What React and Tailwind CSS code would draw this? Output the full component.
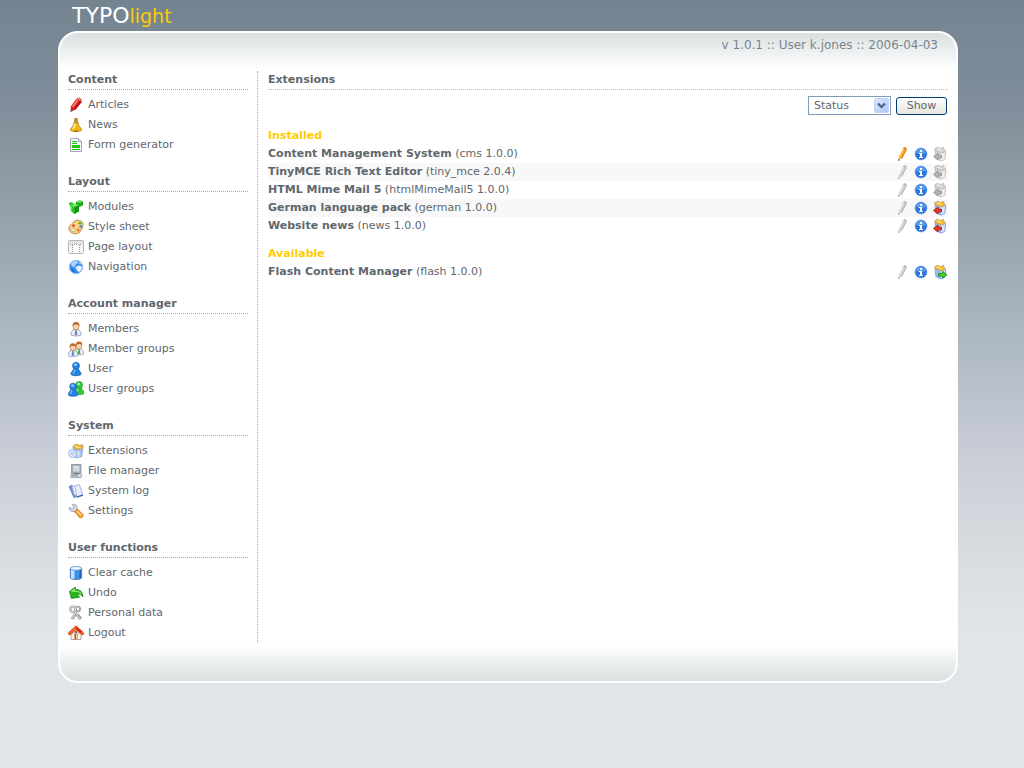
import React from "react";

function Svg({ children }) {
  return (
    <svg viewBox="0 0 16 16" className="size-4 shrink-0" aria-hidden="true">
      {children}
    </svg>
  );
}

const PenIcon = () => (
  <Svg>
    <path d="M3 12 2 15.500l3-1.800z" fill="#5f6f90" />
    <path d="M2.500 13.200 3 9.300 8 2.500 10.500.6l3.100 1.700-.1 3.200L8.200 12l-3.500 2z" fill="#dc1f1f" />
    <path d="M4.600 10 10 2.800" stroke="#ff8a7a" strokeWidth="1.500" />
    <path d="M6.500 12.500 12.900 4.500" stroke="#8e0f1c" strokeWidth="1.100" />
    <path d="m10 1.400 3 2.200" stroke="#f0c8b0" strokeWidth="1" />
  </Svg>
);

const BellIcon = () => (
  <Svg>
    <path d="M6.700 1.500h2.600v5H6.700z" fill="#c98a12" stroke="#a06a10" strokeWidth=".6" />
    <path d="M5.800 5.500h4.400c.3 2.800.8 4 3.200 6v2c-3 1.500-7.800 1.500-10.800 0v-2C5 9.500 5.400 8.500 5.800 5.500z" fill="#f3b51c" stroke="#b87c14" strokeWidth=".7" />
    <path d="M7 6.500c-.2 2.500-.8 4-2 5.500" stroke="#fff0a0" strokeWidth="1.600" fill="none" />
    <path d="M6 13.500h4v1.300H6z" fill="#a0620c" />
  </Svg>
);

const FormIcon = () => (
  <Svg>
    <path d="M2.500 1.500h8l3 3v10h-11z" fill="#f8f9fc" stroke="#a2a8ba" />
    <path d="M10.500 1.500v3h3" fill="#dfe3ee" stroke="#a2a8ba" />
    <path d="M4 4h5v1H4zM4 6h5v1H4zM4 8h8v3H4zM4 12h8v1H4z" fill="#27c414" />
  </Svg>
);

const ModulesIcon = () => (
  <Svg>
    <path d="m8 3 3.500-1.800L15 2.300v4L11.600 8 8 6.500z" fill="#20a81c" />
    <path d="m8 3 3.500-1.800L15 2.300 11.800 4z" fill="#6fe35c" />
    <path d="m2 5.500 4-1 5 1.800v6L6.500 15 2.800 12z" fill="#2bc722" />
    <path d="m2 5.500 4-1 5 1.800-4.500 1.800z" fill="#78e864" />
    <path d="M6.500 8.100 11 6.300v6L6.500 15z" fill="#149414" />
    <path d="m1 4 2-1 2 .7v2L3 6.600 1 5.800z" fill="#39ca2c" />
    <path d="M3.300 7.300v4" stroke="#8df07a" strokeWidth="1" />
  </Svg>
);

const PaletteIcon = () => (
  <Svg>
    <path d="M9 1.300c4-.6 6.300 1.700 6 5-.2 3-1.800 4-2.800 6.200-.8 1.800-3.200 2.400-5.700 2.100C3 14.300.7 11.900 1 9c.2-2.800 1.800-2.700 3-4.300S6.500 1.700 9 1.300z" fill="#f6d490" stroke="#b57c36" strokeWidth=".9" />
    <circle cx="5.300" cy="10.800" r="1.700" fill="#fff" stroke="#b57c36" strokeWidth=".6" />
    <circle cx="5.500" cy="6.600" r="1.300" fill="#e83420" />
    <circle cx="8.700" cy="4" r="1.300" fill="#f4e219" />
    <circle cx="12" cy="4.200" r="1.300" fill="#32b52c" />
    <circle cx="12.700" cy="7.500" r="1.300" fill="#2b7de0" />
    <circle cx="10.300" cy="11" r="1.500" fill="#f27b18" />
  </Svg>
);

const LayoutIcon = () => (
  <Svg>
    <rect x=".5" y="1.500" width="15" height="13" rx="1" fill="#f5f5f5" stroke="#b8b8b8" />
    <path d="M1 2h14v3H1z" fill="#e2e2e2" />
    <path d="M5 6h6v8H5z" fill="#fff" />
    <path d="M2 5.500h12M4.500 6v8M11.500 6v8" stroke="#999" strokeDasharray="1 1" />
  </Svg>
);

const GlobeIcon = () => (
  <Svg>
    <circle cx="8" cy="8" r="6.700" fill="#3a90ea" stroke="#7fb5ea" strokeWidth=".8" />
    <path d="M2.500 5C4 2.300 7 1.500 9.500 2L10 4 7.500 5.500 7 8 4.500 7.500z" fill="#a9d3fa" />
    <path d="m7.500 8 4-1.500 2.500 1.200c0 2.300-1 4-2.800 5.300L9.500 12z" fill="#e9f4ff" />
    <path d="m3 9 2.500 1.500L7 13.700C4.500 13.200 3.100 11.500 3 9z" fill="#1f66c6" />
    <path d="m11.500 3 2 2.300-2-.3z" fill="#fff" />
  </Svg>
);

function Member({ shirt = "#7184c4" }) {
  return (
    <>
      <path d="M3 14c-.2-3.500 1.400-5 3-5.500h4c1.600.5 3.200 2 3 5.500-2 1.300-8 1.300-10 0z" fill="#e9edf8" stroke="#8b94b4" strokeWidth=".8" />
      <path d="m7.300 9-.7 4.300L8 14.700l1.400-1.400L8.700 9z" fill={shirt} />
      <ellipse cx="8" cy="5.400" rx="2.900" ry="3.500" fill="#fbd3ac" stroke="#a9703c" strokeWidth=".6" />
      <path d="M4.700 5.500C4.100 2.800 5.400.9 8 .9s4 1.900 3.300 4.600L10 3.800 6.500 3.600z" fill="#b9672a" />
    </>
  );
}

const MemberIcon = () => <Svg><Member /></Svg>;

const MembersIcon = () => (
  <Svg>
    <g transform="translate(3.500 -.3) scale(.94 .95)"><Member shirt="#36b53e" /></g>
    <g transform="translate(-2.600 1.400) scale(.94 .95)"><Member /></g>
  </Svg>
);

function Pawn({ base, light, edge }) {
  return (
    <>
      <path d="M6 7.500C4.800 9.500 4 10.500 2.900 12c-.4 1.700.8 2.700 5.100 2.700s5.500-1 5.100-2.700C12 10.500 11.200 9.500 10 7.500z" fill={base} stroke={edge} strokeWidth=".7" />
      <circle cx="8" cy="4.700" r="3.500" fill={base} stroke={edge} strokeWidth=".7" />
      <ellipse cx="7.500" cy="3.700" rx="1.700" ry="1.400" fill={light} />
      <path d="M7 8.500 5.300 12.500" stroke={light} strokeWidth="1.200" />
    </>
  );
}

const UserIcon = () => (
  <Svg><Pawn base="#2583e2" light="#88c2fa" edge="#1a5fb0" /></Svg>
);

const UsersIcon = () => (
  <Svg>
    <g transform="translate(3.400 -.6) scale(.97)"><Pawn base="#35c63b" light="#a0f095" edge="#219229" /></g>
    <g transform="translate(-2.700 1) scale(.97)"><Pawn base="#2583e2" light="#88c2fa" edge="#1a5fb0" /></g>
  </Svg>
);

const ExtensionsIcon = () => (
  <Svg>
    <path d="m5 3.500 9-.5 1 1.500-1.200 9-5.800 1.500L6 12z" fill="#a6c1f4" stroke="#7f9cd8" strokeWidth=".7" />
    <path d="m5 3 3-2 4 1.500 2.500-1L15 4l-2.500 2.500-5-.5z" fill="#f7b92a" stroke="#a98a5b" strokeWidth=".6" />
    <path d="m6.500 3.300 5.500 1.500" stroke="#fff0a0" />
    <circle cx="4.500" cy="10.600" r="3.900" fill="#e6edfd" stroke="#9cb2ea" strokeWidth="1" />
    <circle cx="4.500" cy="10.600" r="1.200" fill="#fff" stroke="#7692d8" strokeWidth=".8" />
    <path d="M10.500 8v5.500" stroke="#e8f0ff" strokeWidth="1.600" />
  </Svg>
);

const FileIcon = () => (
  <Svg>
    <path d="M3.500 1.500h9.500v9H3.500z" fill="#a5adb9" stroke="#8a919d" strokeWidth=".8" />
    <path d="M5 3h6.500v5.500H5z" fill="#d0d6df" />
    <path d="M6 4h4" stroke="#eef2f7" strokeWidth="1" />
    <path d="M3.500 10.500h9.500l.8 3-1 1.200H3.500l-1-1.200z" fill="#c4c9d1" stroke="#8c939f" strokeWidth=".7" />
    <path d="M6 10.700h5" stroke="#5e6673" />
    <path d="M4 12.700h6" stroke="#8b929e" />
    <path d="M10.500 12.700h2" stroke="#fff" />
  </Svg>
);

const LogIcon = () => (
  <Svg>
    <path d="m1 3.500 3-1.300 5 11-3 1.500z" fill="#7594d8" stroke="#5170b5" strokeWidth=".7" />
    <path d="M4 2.200c1.800 0 2.600 1.500 3.400 3L9 13.200 6 11z" fill="#fff" stroke="#90a5d3" strokeWidth=".6" />
    <path d="m6.500 3 4.800-1.500 3.400 10L9 14z" fill="#e8effc" stroke="#8ba3da" strokeWidth=".8" />
    <path d="m8 13.700 6.700-2.200.5 1.300-6 2z" fill="#3e64b6" />
  </Svg>
);

const SettingsIcon = () => (
  <Svg>
    <path d="M1 4.500 4 5.700 5.700 4 4.500 1.300c2.800-.5 4.800 1.200 4.500 4l1.500 2.200L8 9.500 5.800 8.500C3 9.100 1 7.300 1 4.500z" fill="#d3d8e2" stroke="#9299a6" strokeWidth=".8" />
    <path d="m6.800 8.500 2.700-2.400 5.200 5.200c1.300 1.900-.6 4.300-3.100 3.300z" fill="#f7a322" stroke="#c26c14" strokeWidth=".8" />
    <path d="m9.200 8.200 4 4.100" stroke="#ffe0a0" strokeWidth="1.300" />
  </Svg>
);

const CacheIcon = () => (
  <Svg>
    <path d="M2.300 3.300h11.400v9.700c-2.300 2-9.100 2-11.400 0z" fill="#3d91eb" stroke="#3e70b7" strokeWidth=".8" />
    <path d="M3 5h3.500v9c-1.400-.1-2.800-.5-3.500-1z" fill="#c2e0ff" />
    <path d="M11.500 5H13v8l-1.500.8z" fill="#1d62bc" />
    <ellipse cx="8" cy="3.400" rx="5.700" ry="1.900" fill="#eaf5ff" stroke="#5e90cf" strokeWidth=".8" />
  </Svg>
);

const UndoIcon = () => (
  <Svg>
    <path d="M1.500 6.500 7.300 2v2.700c4.200-.6 7.500 1.800 7.600 7.300-1.500-2.300-3.600-3.300-5.700-2.800l2.400 3-8.200 1.200z" fill="#28b323" stroke="#168315" strokeWidth=".8" />
    <path d="m3.500 7 2.900-2.500v1.800c3-.3 5.300.3 7 2.500" fill="none" stroke="#9af080" strokeWidth="1.200" />
  </Svg>
);

const KeysIcon = () => (
  <Svg>
    <path d="M8.800 5.500 3.500 14M4.300 12.500 6.500 13.500M5.700 10.300l2 1" stroke="#a2a2a2" strokeWidth="2.200" fill="none" />
    <path d="m6 6.500 6.500 7.700M10 11.300l1.500-1.300M11.800 13.300l1.500-1.300" stroke="#9a9a9a" strokeWidth="2.600" fill="none" />
    <path d="m6 6.500 6.300 7.500M8.800 5.500 3.800 13.500" stroke="#e5e5e5" strokeWidth="1" />
    <circle cx="9.800" cy="4" r="2.300" fill="none" stroke="#a6a6a6" strokeWidth="1.800" />
    <circle cx="5" cy="4.200" r="2.700" fill="none" stroke="#999" strokeWidth="2.200" />
    <circle cx="5" cy="4.200" r="2.700" fill="none" stroke="#e1e1e1" strokeWidth="1" />
  </Svg>
);

const HomeIcon = () => (
  <Svg>
    <path d="M3 8h10v6.500H3z" fill="#f7f4ee" stroke="#999" strokeWidth=".8" />
    <path d="M8 .8.600 7.500v2L2 10l6-5.300L14 10l1.400-.5v-2z" fill="#f4662a" stroke="#c83c11" strokeWidth=".7" />
    <path d="m8 1.200 6 5.500-1.200 1.300L8 4.300z" fill="#dc2410" />
    <path d="M6.500 9h3v5.700h-3z" fill="#b45a24" />
    <path d="M8 9.500h1.300v5H8z" fill="#f7c690" />
    <circle cx="8" cy="7" r="1.100" fill="#8f2d1a" />
  </Svg>
);

function PencilIcon({ active }) {
  const c = active
    ? { body: "#fba41c", light: "#ffd25a", tip: "#f0d4a0", lead: "#444", edge: "#e0701c" }
    : { body: "#cfcfcf", light: "#e6e6e6", tip: "#dedede", lead: "#999", edge: "#b5b5b5" };
  return (
    <Svg>
      <path d="m4.500 11.500 4.700-9.300 3.200 1.400-4.700 9.300z" fill={c.body} />
      <path d="m5.300 11.300 4.700-9" stroke={c.light} strokeWidth="1.200" />
      <path d="m7.600 12.600 4.700-9" stroke={c.edge} strokeWidth="1" />
      <path d="m9 2.500 1.100-1.500 2.500 1-.1 1.900z" fill={c.edge} />
      <path d="m4.500 11.500-.3 3.200 3.500-1.800z" fill={c.tip} />
      <path d="m4.400 12.900-.2 2 2-1z" fill={c.lead} />
    </Svg>
  );
}

const InfoIcon = () => (
  <Svg>
    <circle cx="8" cy="8" r="6" fill="#2b77e0" stroke="#5f9ae5" strokeWidth=".6" />
    <path d="M3 7C3.500 4.200 5.400 2.700 8 2.700s4.500 1.500 5 4.300c-3.100 1-6.900 1-10 0z" fill="#5b9ded" />
    <path d="M7 4h2v2H7zM6 7h3v4h1v1H6v-1h1V8H6z" fill="#fff" />
  </Svg>
);

function BoxIcon({ kind }) {
  const gray = kind === "locked";
  return (
    <Svg>
      <path d="m3 4 1-1 9 1.500.7 2.500-1 6.500L9 15.200 3.800 12.500z" fill={gray ? "#dadada" : "#9bbbf3"} stroke={gray ? "#bcbcbc" : "#7c9cdc"} strokeWidth=".8" />
      <path d="m9 7 4-1-.8 7L9 14.800z" fill={gray ? "#eee" : "#d9e6ff"} />
      <path d="m2.500 3 3-1.800 3 1.300 3-1.200.5 2 1.500 1.500L11 7 4.500 5.500z" fill={gray ? "#d2d2d2" : "#f9b92b"} stroke={gray ? "#b3b3b3" : "#b69a75"} strokeWidth=".7" />
      <path d="m5 3 4.500 1.500" stroke={gray ? "#f5f5f5" : "#fff0a0"} />
      {kind === "install" ? (
        <path d="M6.500 9.500h4v-2l4.500 3.300-4.500 3.300v-2h-4z" fill="#4cd72b" stroke="#16830f" strokeWidth=".9" />
      ) : (
        <path d="M9.500 9.200H6V7l-4.500 3.500L6 14v-2.200h3.500z" fill={gray ? "#b6b6b6" : "#ee3820"} stroke={gray ? "#929292" : "#a81612"} strokeWidth=".9" />
      )}
    </Svg>
  );
}

const menu = [
  ["Content", [["Articles", PenIcon], ["News", BellIcon], ["Form generator", FormIcon]]],
  ["Layout", [["Modules", ModulesIcon], ["Style sheet", PaletteIcon], ["Page layout", LayoutIcon], ["Navigation", GlobeIcon]]],
  ["Account manager", [["Members", MemberIcon], ["Member groups", MembersIcon], ["User", UserIcon], ["User groups", UsersIcon]]],
  ["System", [["Extensions", ExtensionsIcon], ["File manager", FileIcon], ["System log", LogIcon], ["Settings", SettingsIcon]]],
  ["User functions", [["Clear cache", CacheIcon], ["Undo", UndoIcon], ["Personal data", KeysIcon], ["Logout", HomeIcon]]],
];

const installed = [
  { name: "Content Management System", version: "cms 1.0.0", editable: true, kind: "locked" },
  { name: "TinyMCE Rich Text Editor", version: "tiny_mce 2.0.4", kind: "locked" },
  { name: "HTML Mime Mail 5", version: "htmlMimeMail5 1.0.0", kind: "locked" },
  { name: "German language pack", version: "german 1.0.0", kind: "uninstall" },
  { name: "Website news", version: "news 1.0.0", kind: "uninstall" },
];

const available = [{ name: "Flash Content Manager", version: "flash 1.0.0", kind: "install" }];

function ExtensionTable({ title, rows }) {
  return (
    <section>
      <h3 className="h-[18px] font-bold leading-[18px] text-[#ffcc00]">{title}</h3>
      <table className="w-full border-collapse">
        <tbody>
          {rows.map((row) => (
            <tr key={row.name} className="h-[18px] even:bg-[#f8f8f8]">
              <td className="p-0 leading-[18px]">
                <strong>{row.name}</strong> ({row.version})
              </td>
              <td className="p-0">
                <div className="flex justify-end gap-[3px]">
                  <button type="button" aria-label={`Edit ${row.name}`} disabled={!row.editable}>
                    <PencilIcon active={row.editable} />
                  </button>
                  <button type="button" aria-label={`Details of ${row.name}`}>
                    <InfoIcon />
                  </button>
                  <button type="button" aria-label={`${row.kind === "install" ? "Install" : "Uninstall"} ${row.name}`} disabled={row.kind === "locked"}>
                    <BoxIcon kind={row.kind} />
                  </button>
                </div>
              </td>
            </tr>
          ))}
        </tbody>
      </table>
    </section>
  );
}

export default function App() {
  return (
    <div className="min-h-screen bg-[linear-gradient(#738490_0px,#7f8d9a_100px,#99a6ae_240px,#b2bcc6_360px,#c8ccd6_450px,#d7dbdf_540px,#e1e5e8_630px)] pr-2 font-['DejaVu_Sans',Verdana,sans-serif] text-[11px] text-[#5f676c]">
      <div className="mx-auto w-full max-w-[900px]">
        <header className="flex h-[31px] items-center pl-[14px]">
          <a href="#home" aria-label="TYPOlight" className="flex items-baseline leading-8">
            <span className="text-[22px] text-white">TYPO</span>
            <span className="text-[19px] text-[#ffcc00]">light</span>
          </a>
        </header>
        <div className="rounded-[20px] border-2 border-white bg-white bg-[linear-gradient(#d9e0e0,#fff_36px,#fff_calc(100%_-_36px),#d9e0e0)] px-2 pb-[38px]">
          <p className="h-[38px] pr-[10px] pt-1 text-right text-[12px] leading-4 text-[#7b858b]">
            v 1.0.1 :: User k.jones :: 2006-04-03
          </p>
          <div className="flex">
            <nav className="flex w-[190px] shrink-0 flex-col gap-[18px] border-r border-dotted border-[#aaa] pr-[9px]">
              {menu.map(([title, items]) => (
                <section key={title}>
                  <h2 className="h-[19px] border-b border-dotted border-[#aaa] font-bold leading-[18px]">{title}</h2>
                  <ul className="mt-[5px]">
                    {items.map(([label, Icon]) => (
                      <li key={label}>
                        <a href="#menu" className="flex h-5 items-center gap-1">
                          <Icon />
                          {label}
                        </a>
                      </li>
                    ))}
                  </ul>
                </section>
              ))}
            </nav>
            <main className="min-w-0 flex-1 pl-[10px]">
              <h1 className="h-[19px] border-b border-dotted border-[#bbb] font-bold leading-[18px]">Extensions</h1>
              <form className="mb-3 mt-1.5 flex items-center justify-end gap-[5px]" onSubmit={(e) => e.preventDefault()}>
                <div className="relative w-[83px]">
                  <select aria-label="Filter" className="block h-[19px] w-full appearance-none border border-[#7f9db9] bg-white pl-[5px] pr-5 leading-4 outline-none">
                    <option>Status</option>
                  </select>
                  <svg viewBox="0 0 15 15" className="pointer-events-none absolute right-[2px] top-[2px] size-[15px]" aria-hidden="true">
                    <defs>
                      <linearGradient id="arrow" x2="1" y2="1">
                        <stop stopColor="#dce6ff" />
                        <stop offset="1" stopColor="#aec8f7" />
                      </linearGradient>
                    </defs>
                    <rect x=".5" y=".5" width="14" height="14" rx="1.500" fill="url(#arrow)" stroke="#c2d0f5" />
                    <path d="m4 5.500 3.500 3.500L11 5.500" fill="none" stroke="#4d6185" strokeWidth="2.200" />
                  </svg>
                </div>
                <button type="submit" className="mr-px h-[18px] w-[51px] rounded-[3px] border border-[#003c74] bg-linear-to-b from-white to-[#e6e4dc] leading-4">
                  Show
                </button>
              </form>
              <div className="flex flex-col gap-[10px]">
                <ExtensionTable title="Installed" rows={installed} />
                <ExtensionTable title="Available" rows={available} />
              </div>
            </main>
          </div>
        </div>
      </div>
    </div>
  );
}
